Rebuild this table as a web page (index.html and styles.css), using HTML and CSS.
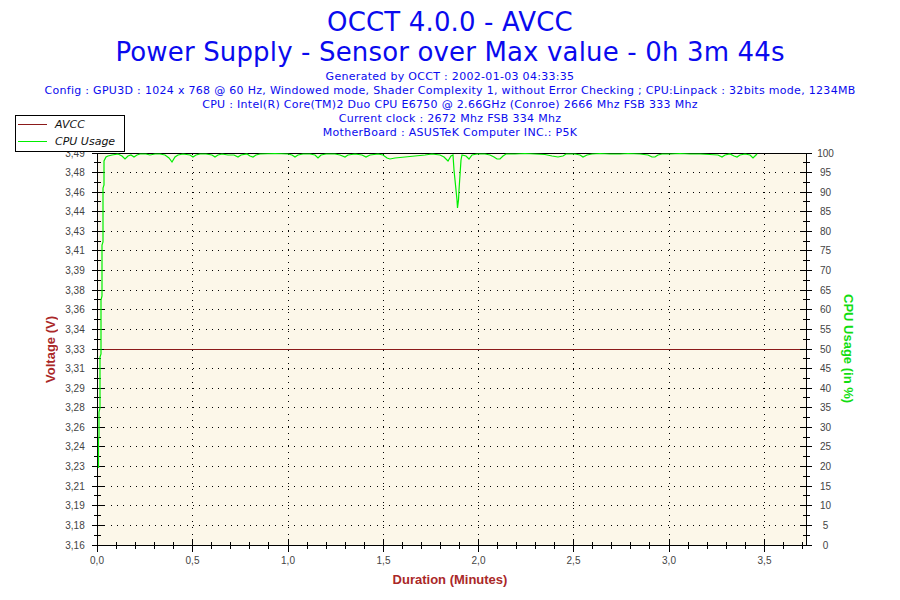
FILE: index.html
```html
<!DOCTYPE html>
<html>
<head>
<meta charset="utf-8">
<title>OCCT 4.0.0 - AVCC</title>
<link rel="stylesheet" href="styles.css">
</head>
<body>
<div class="page">
  <header class="head">
    <div class="titles">
      <div>OCCT 4.0.0 - AVCC</div>
      <div>Power Supply - Sensor over Max value - 0h 3m 44s</div>
    </div>
    <div class="info">
      <div>Generated by OCCT : 2002-01-03 04:33:35</div>
      <div>Config : GPU3D : 1024 x 768 @ 60 Hz, Windowed mode, Shader Complexity 1, without Error Checking ; CPU:Linpack : 32bits mode, 1234MB</div>
      <div>CPU : Intel(R) Core(TM)2 Duo CPU E6750 @ 2.66GHz (Conroe) 2666 Mhz FSB 333 Mhz</div>
      <div>Current clock : 2672 Mhz FSB 334 Mhz</div>
      <div>MotherBoard : ASUSTeK Computer INC.: P5K</div>
    </div>
  </header>

  <section class="chart">
    <div class="ytitle ytitle-left"><span>Voltage (V)</span></div>
    <svg class="plot" viewBox="60 140 775 430" width="775" height="430">
      <rect class="plot-bg" x="98" y="154" width="708" height="391"/>
      <path class="grid" d="M98 172.5H806M98 192.5H806M98 211.5H806M98 231.5H806M98 250.5H806M98 270.5H806M98 290.5H806M98 309.5H806M98 329.5H806M98 368.5H806M98 388.5H806M98 407.5H806M98 427.5H806M98 446.5H806M98 466.5H806M98 486.5H806M98 505.5H806M98 525.5H806"/>
      <path class="grid" d="M192.5 154V545M288.5 154V545M383.5 154V545M478.5 154V545M573.5 154V545M669.5 154V545M764.5 154V545"/>
      <path class="avcc" d="M98 349.5H806"/>
      <rect class="frame" x="97.5" y="153.5" width="709" height="392"/>
      <path class="ticks" d="M92 153.5H104M92 172.5H104M92 192.5H104M92 211.5H104M92 231.5H104M92 250.5H104M92 270.5H104M92 290.5H104M92 309.5H104M92 329.5H104M92 349.5H104M92 368.5H104M92 388.5H104M92 407.5H104M92 427.5H104M92 446.5H104M92 466.5H104M92 486.5H104M92 505.5H104M92 525.5H104M92 545.5H104
        M94 162.5H101M94 182.5H101M94 201.5H101M94 221.5H101M94 241.5H101M94 260.5H101M94 280.5H101M94 299.5H101M94 319.5H101M94 339.5H101M94 358.5H101M94 378.5H101M94 397.5H101M94 417.5H101M94 437.5H101M94 456.5H101M94 476.5H101M94 495.5H101M94 515.5H101M94 535.5H101
        M800 153.5H812M800 172.5H812M800 192.5H812M800 211.5H812M800 231.5H812M800 250.5H812M800 270.5H812M800 290.5H812M800 309.5H812M800 329.5H812M800 349.5H812M800 368.5H812M800 388.5H812M800 407.5H812M800 427.5H812M800 446.5H812M800 466.5H812M800 486.5H812M800 505.5H812M800 525.5H812M800 545.5H812
        M803 162.5H810M803 182.5H810M803 201.5H810M803 221.5H810M803 241.5H810M803 260.5H810M803 280.5H810M803 299.5H810M803 319.5H810M803 339.5H810M803 358.5H810M803 378.5H810M803 397.5H810M803 417.5H810M803 437.5H810M803 456.5H810M803 476.5H810M803 495.5H810M803 515.5H810M803 535.5H810
        M97.5 539V552M192.5 539V552M288.5 539V552M383.5 539V552M478.5 539V552M573.5 539V552M669.5 539V552M764.5 539V552
        M116.5 542V549M135.5 542V549M154.5 542V549M173.5 542V549M211.5 542V549M230.5 542V549M249.5 542V549M268.5 542V549M307.5 542V549M326.5 542V549M345.5 542V549M364.5 542V549M402.5 542V549M421.5 542V549M440.5 542V549M459.5 542V549M497.5 542V549M516.5 542V549M535.5 542V549M554.5 542V549M592.5 542V549M611.5 542V549M630.5 542V549M649.5 542V549M688.5 542V549M707.5 542V549M726.5 542V549M745.5 542V549M783.5 542V549M802.5 542V549"/>
      <polyline class="cpu" points="98.5,468 98.5,440 99,436 99,412 100,408 100,357 101,354 101,300 102,296 102,245 103,242 103,188 104,185 104,161 106,157 108,156 112,155 118,154 122,156 125,159 128,156 131,155 134,157 137,155 140,154 146,154 150,155 155,154 160,154 165,155 169,158 172,162 175,157 178,155 183,154 190,155 193,157 196,155 200,154 206,154 212,155 215,157 218,155 222,154 228,155 234,155 238,157 241,155 247,154 250,156 253,157 256,155 260,154 275,153.5 288,154 292,155 295,157 298,155 303,154 310,154 315,155 318,158 321,155 326,154 335,154 340,155 345,157 348,155 355,154 362,155 366,157 370,155 378,154 383,155 387,158 390,159 395,158 405,157 415,156 425,155 432,154 440,155 444,157 448,161 451,156 453,155 454,170 455,180 456,190 457,200 457.5,208 458.5,200 459,190 460,175 461,160 462,155 466,156 469,159 472,155 477,154 485,154 490,155 494,157 497,159 500,159 503,156 506,154 515,154 525,153.5 535,154 545,154.5 552,156 558,157 563,156 566,154 575,154 580,155 583,157 587,155 592,154 600,153.5 610,154 620,154 628,153.5 640,154 648,155 652,157 655,157 658,155 662,154 670,154 680,153.5 690,154 700,154 710,154.5 718,155 722,157 725,155 730,154 734,156 737,157 740,155 745,154 750,155 753,158 756,155 757,154"/>
      <g class="lbl lbl-left">
        <text x="75" y="156.5">3,49</text>
        <text x="75" y="175.5">3,48</text>
        <text x="75" y="195.5">3,46</text>
        <text x="75" y="214.5">3,44</text>
        <text x="75" y="234.5">3,43</text>
        <text x="75" y="253.5">3,41</text>
        <text x="75" y="273.5">3,39</text>
        <text x="75" y="293.5">3,38</text>
        <text x="75" y="312.5">3,36</text>
        <text x="75" y="332.5">3,34</text>
        <text x="75" y="352.5">3,33</text>
        <text x="75" y="371.5">3,31</text>
        <text x="75" y="391.5">3,29</text>
        <text x="75" y="410.5">3,28</text>
        <text x="75" y="430.5">3,26</text>
        <text x="75" y="449.5">3,24</text>
        <text x="75" y="469.5">3,23</text>
        <text x="75" y="489.5">3,21</text>
        <text x="75" y="508.5">3,19</text>
        <text x="75" y="528.5">3,18</text>
        <text x="75" y="548.5">3,16</text>
      </g>
      <g class="lbl lbl-right">
        <text x="825.5" y="156.5">100</text>
        <text x="825.5" y="175.5">95</text>
        <text x="825.5" y="195.5">90</text>
        <text x="825.5" y="214.5">85</text>
        <text x="825.5" y="234.5">80</text>
        <text x="825.5" y="253.5">75</text>
        <text x="825.5" y="273.5">70</text>
        <text x="825.5" y="293.5">65</text>
        <text x="825.5" y="312.5">60</text>
        <text x="825.5" y="332.5">55</text>
        <text x="825.5" y="352.5">50</text>
        <text x="825.5" y="371.5">45</text>
        <text x="825.5" y="391.5">40</text>
        <text x="825.5" y="410.5">35</text>
        <text x="825.5" y="430.5">30</text>
        <text x="825.5" y="449.5">25</text>
        <text x="825.5" y="469.5">20</text>
        <text x="825.5" y="489.5">15</text>
        <text x="825.5" y="508.5">10</text>
        <text x="825.5" y="528.5">5</text>
        <text x="825.5" y="548.5">0</text>
      </g>
      <g class="lbl lbl-bottom">
        <text x="97" y="563.5">0,0</text>
        <text x="192.5" y="563.5">0,5</text>
        <text x="288" y="563.5">1,0</text>
        <text x="383.5" y="563.5">1,5</text>
        <text x="478.5" y="563.5">2,0</text>
        <text x="573.5" y="563.5">2,5</text>
        <text x="669" y="563.5">3,0</text>
        <text x="764.5" y="563.5">3,5</text>
      </g>
    </svg>
    <div class="ytitle ytitle-right"><span>CPU Usage (in %)</span></div>
  </section>

  <div class="xtitle">Duration (Minutes)</div>

  <div class="legend">
    <div class="legend-row"><span class="swatch swatch-avcc"></span><span>AVCC</span></div>
    <div class="legend-row legend-row-2"><span class="swatch swatch-cpu"></span><span>CPU Usage</span></div>
  </div>
</div>
</body>
</html>
```

FILE: styles.css
```css
* { box-sizing: border-box; }

body {
  margin: 0;
  background: #ffffff;
}

.page {
  position: relative;
  width: 900px;
  height: 600px;
  overflow: hidden;
  background: #ffffff;
}

.head {
  text-align: center;
  color: #0a0aee;
  font-family: "DejaVu Sans", Verdana, sans-serif;
  padding-top: 7px;
  white-space: nowrap;
}

.titles {
  font-size: 26px;
  line-height: 30px;
  letter-spacing: 0.15px;
}

.info {
  margin-top: 3px;
  font-size: 11px;
  line-height: 14px;
  letter-spacing: 0.3px;
}

.chart {
  display: flex;
  height: 430px;
}

.ytitle {
  display: flex;
  align-items: center;
  padding-bottom: 12px;
  font-family: "Liberation Sans", Arial, sans-serif;
  font-weight: bold;
  font-size: 13px;
  line-height: 14px;
  white-space: nowrap;
}

.ytitle-left {
  width: 60px;
  justify-content: flex-end;
  padding-right: 2px;
  color: #aa2828;
}

.ytitle-left span {
  writing-mode: vertical-rl;
  transform: rotate(180deg);
}

.ytitle-right {
  width: 65px;
  padding-left: 6px;
  color: #11dd11;
}

.ytitle-right span {
  writing-mode: vertical-rl;
}

.plot {
  display: block;
  flex: none;
  width: 775px;
  height: 430px;
}

.plot-bg { fill: #fcf7e9; }

.grid {
  fill: none;
  stroke: #000000;
  stroke-width: 1;
  stroke-dasharray: 1 5.33;
  shape-rendering: crispEdges;
}

.avcc {
  stroke: #8b1a1a;
  stroke-width: 1;
  shape-rendering: crispEdges;
}

.frame {
  fill: none;
  stroke: #000000;
  stroke-width: 1;
  shape-rendering: crispEdges;
}

.ticks {
  fill: none;
  stroke: #000000;
  stroke-width: 1;
  shape-rendering: crispEdges;
}

.cpu {
  fill: none;
  stroke: #00ee00;
  stroke-width: 1.2;
  stroke-linejoin: miter;
}

.lbl {
  font-family: "Liberation Sans", Arial, sans-serif;
  font-size: 10px;
  fill: #444444;
  text-anchor: middle;
}

.xtitle {
  height: 20px;
  text-align: center;
  font-family: "Liberation Sans", Arial, sans-serif;
  font-weight: bold;
  font-size: 13px;
  line-height: 20px;
  color: #aa2828;
}

.legend {
  position: absolute;
  left: 15px;
  top: 115px;
  width: 110px;
  border: 1px solid #000000;
  background: #ffffff;
  padding-bottom: 1px;
  font-family: "DejaVu Sans", Verdana, sans-serif;
  font-style: italic;
  font-size: 11px;
  color: #111111;
}

.legend-row {
  display: flex;
  align-items: center;
  height: 16px;
}

.legend-row-2 { height: 18px; }

.swatch {
  width: 29px;
  height: 1px;
  margin-left: 2px;
  margin-right: 8px;
  flex: none;
}

.swatch-avcc { background: #8b1a1a; }
.swatch-cpu { background: #00ee00; }
```
